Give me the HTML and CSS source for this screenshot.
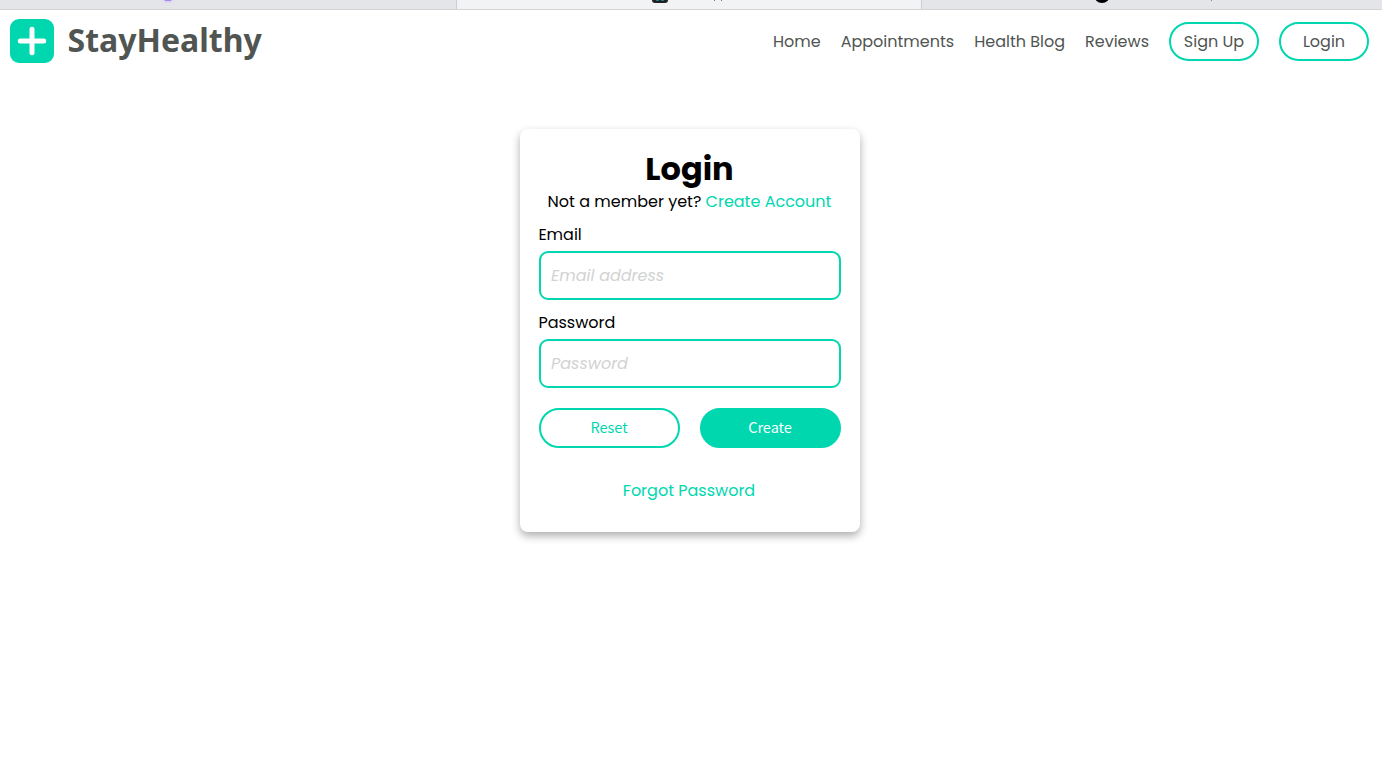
FILE: index.html
```html
<!DOCTYPE html>
<html lang="en">
<head>
<meta charset="utf-8">
<title>StayHealthy</title>
<link rel="stylesheet" href="styles.css">
</head>
<body>
<div class="tabs">
  <div class="tab tab-first"><svg width="14" height="3"><circle cx="7" cy="-4" r="7" fill="#d9d0f5"/><path d="M4 0h6" stroke="#a58ae0" stroke-width="2"/></svg></div>
  <div class="tab tab-active"><svg width="72" height="4"><rect y="-13" width="16" height="16" rx="3" fill="#202124"/><path d="M4 0.5h3M9 0.5h3" stroke="#277780"/><path d="M62.500 0v1M69.500 0v1" stroke="#777"/></svg></div>
  <div class="tab tab-last"><svg width="120" height="4"><circle cx="7" cy="-5" r="8" fill="#000"/><path d="M116.500 0v1" stroke="#888"/></svg></div>
</div>
<nav class="nav">
  <a class="brand"><svg class="logo" viewBox="0 0 44 44"><rect width="44" height="44" rx="9" fill="#00d7af"/><path d="M22 10.300v23.400M10.300 22h23.400" stroke="#fff" stroke-width="5" stroke-linecap="round"/></svg><span class="name">StayHealthy</span></a>
  <div class="links">
    <a>Home</a><a>Appointments</a><a>Health Blog</a><a>Reviews</a>
    <a class="pill">Sign Up</a><a class="pill">Login</a>
  </div>
</nav>
<main class="card">
  <h1 class="title">Login</h1>
  <p class="member"><span>Not a member yet?</span> <a class="link">Create Account</a></p>
  <form>
    <label class="label label-email" for="email">Email</label>
    <input class="input" id="email" placeholder="Email address">
    <label class="label label-password" for="password">Password</label>
    <input class="input" id="password" type="password" placeholder="Password">
    <div class="actions"><button class="button" type="reset">Reset</button><button class="button primary" type="button">Create</button></div>
  </form>
  <a class="link forgot">Forgot Password</a>
</main>
</body>
</html>
```
FILE: styles.css
```css
* { box-sizing: border-box; }
body { margin: 0; height: 780px; overflow: hidden; background: #fff; color: #000; font: 16px/24px Poppins, Inter, sans-serif; }
.tabs { display: flex; height: 10px; border-bottom: 1px solid #d3d4d6; background: #e4e5e9; }
.tab svg { display: block; }
.tab-first { width: 456px; padding-left: 161px; }
.tab-active { width: 466px; padding-left: 195px; background: #f2f3f5; border: solid #cccdd0; border-width: 0 1px; }
.tab-last { flex: 1; padding-left: 173px; }
.nav { display: flex; justify-content: space-between; height: 63px; padding: 9px 13px 0 10px; color: #505552; }
.brand { display: flex; gap: 13.5px; }
.logo { width: 44px; height: 44px; }
.name { font: bold 32px/42px "Noto Sans", sans-serif; }
.links { display: flex; align-items: center; gap: 20px; height: 45px; white-space: nowrap; }
.pill { width: 90px; height: 39px; border: 2px solid #00d7af; border-radius: 20px; line-height: 35px; text-align: center; }
.card { width: 340px; height: 403px; margin: 56px 0 0 520px; padding: 21px 19px; border-radius: 8px; background: #fff; box-shadow: 0 4px 8px rgba(0,0,0,.32); }
.title { margin: 0 0 2px; padding-right: 1px; font-size: 32px; line-height: 38px; text-align: center; }
.member { margin: 0; padding-right: 1px; text-align: center; white-space: nowrap; }
.link { color: #00d7af; }
.label { display: block; height: 24px; margin: 9px 0 0 -.6px; }
.label-password { margin-top: 11px; }
.input { display: block; width: 302px; height: 49px; margin-top: 4px; padding: 0 10px; border: 2px solid #00d7af; border-radius: 9px; font: inherit; background: #fff; }
.input::placeholder { color: #d2d2d2; font-style: italic; opacity: 1; }
.actions { display: flex; gap: 20px; margin-top: 20px; }
.button { width: 141px; height: 40px; padding: 0 1px 2px 0; border: 2px solid #00d7af; border-radius: 20px; background: #fff; color: #00d7af; font: 14.5px/20px "Noto Sans CJK JP", sans-serif; }
.primary { background: #00d7af; color: #fff; }
.forgot { display: block; margin-top: 31px; padding-right: 2px; text-align: center; }
```
